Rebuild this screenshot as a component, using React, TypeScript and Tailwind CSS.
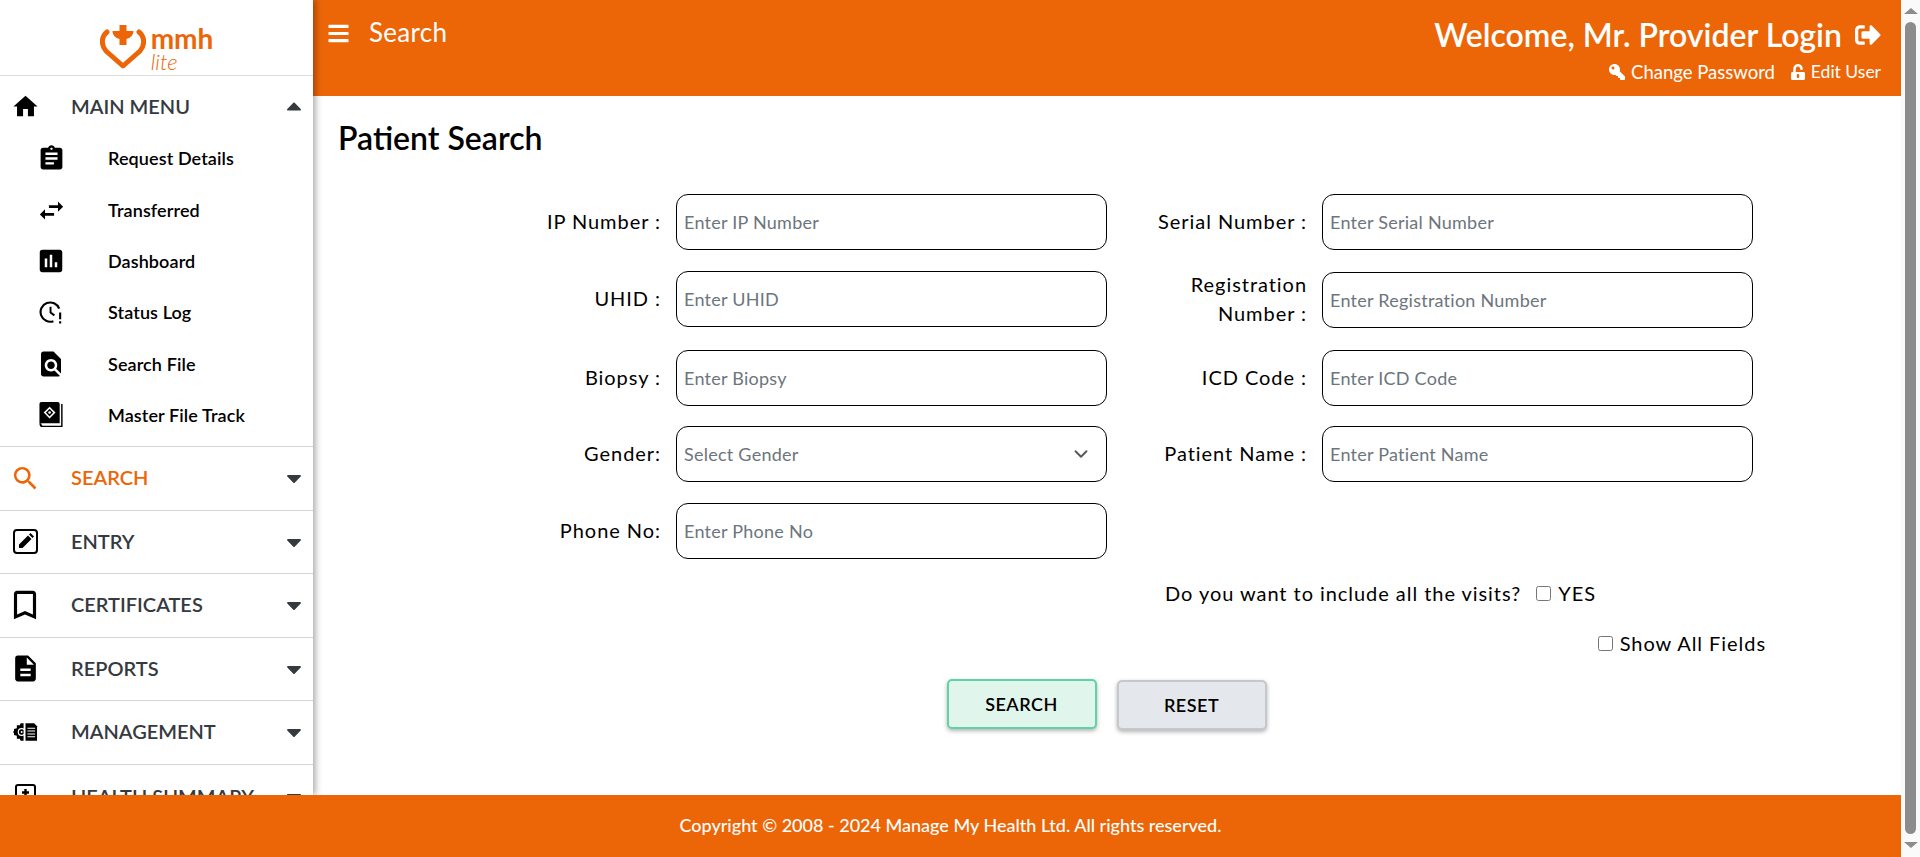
import { JSX, ReactNode } from "react"
import { ChevronDown } from "lucide-react"
import { FaBars, FaCaretDown, FaCaretUp, FaKey, FaSignOutAlt, FaUnlockAlt } from "react-icons/fa"
import {
    MdAssignment,
    MdBookmarkBorder,
    MdDescription,
    MdFindInPage,
    MdHome,
    MdInsertChart,
    MdSearch,
    MdSwapHoriz,
} from "react-icons/md"

function Logo(): JSX.Element {
    return (
        <div className="h-[76px] shrink-0 flex justify-center border-b border-[#dedede]">
            <div className="flex gap-[5px] pt-[24px]">
                <svg viewBox="0 0 46 45" className="w-[46px] h-[45px]">
                    <path d="M7 8 C1 13 1 21 6 27 L23 42 L40 27 C45 21 45 13 39 8" fill="none" stroke="#ec6608" strokeWidth="5" strokeLinecap="round" strokeLinejoin="round" />
                    <path d="M19.5 1 h7 v6 h7 c0 4 -3 7 -7 8 v6 h-7 v-6 c-4 -1 -7 -4 -7 -8 h7 z" fill="#ec6608" />
                </svg>
                <div className="flex flex-col text-[#ec6608]">
                    <span className="text-[28px] leading-[28px] font-bold">mmh</span>
                    <span className="text-[22px] leading-[20px] italic font-light">lite</span>
                </div>
            </div>
        </div>
    )
}

function StatusLogIcon(): JSX.Element {
    return (
        <svg viewBox="0 0 26 26" className="w-[25px] h-[25px]">
            <path d="M21 9 A10 10 0 1 0 15 22" fill="none" stroke="#000" strokeWidth="2.2" />
            <path d="M12 7 v6 l4 3" fill="none" stroke="#000" strokeWidth="2" />
            <path d="M22 13 v7 M22 22 v2.5" stroke="#000" strokeWidth="2.2" />
        </svg>
    )
}

function MasterFileIcon(): JSX.Element {
    return (
        <svg viewBox="0 0 25 28" className="w-[25px] h-[27px]">
            <path d="M2 0 h17 a2 2 0 0 1 2 2 v20 h-21 v-20 a2 2 0 0 1 2 -2 z" fill="#000" />
            <path d="M0 22 c0 3 1 4 3 4 h21 v-24 h-1.5 v22.5 h-19 c-1 0 -1.5 -1 -1.5 -2.5 z" fill="#000" />
            <path d="M10.5 6 l5 5 l-5 5 l-5 -5 z" fill="none" stroke="#fff" strokeWidth="1.6" />
            <circle cx="10.5" cy="11" r="1.3" fill="#fff" />
        </svg>
    )
}

function EntryIcon(): JSX.Element {
    return (
        <svg viewBox="0 0 25 25" className="w-[25px] h-[25px]">
            <rect x="1" y="1" width="23" height="23" rx="3" fill="none" stroke="#000" strokeWidth="2" />
            <path d="M6 19 v-3.5 l9 -9 l3.5 3.5 l-9 9 z M16 5.5 l1.5 -1.5 l3.5 3.5 l-1.5 1.5 z" fill="#000" />
        </svg>
    )
}

function ManagementIcon(): JSX.Element {
    return (
        <svg viewBox="0 0 26 20" className="w-[25px] h-[20px]">
            <path d="M11 1 H8 L7 3 L4 3 L4 6 L1 7 V9 L0 10 L1 11 V13 L4 14 L4 17 L7 17 L8 19 H11 Z" fill="#000" />
            <circle cx="9" cy="10" r="3.5" fill="none" stroke="#fff" strokeWidth="1.2" />
            <circle cx="9" cy="10" r="1" fill="#fff" />
            <path d="M13 1 h9 l3 3 v15 h-12 z" fill="#000" />
            <path d="M15 6 h8 M15 9 h8 M15 12 h8 M15 15 h8" stroke="#fff" strokeWidth="1.1" />
        </svg>
    )
}

function HealthIcon(): JSX.Element {
    return (
        <svg viewBox="0 0 25 25" className="w-[25px] h-[25px]">
            <rect x="3" y="1" width="19" height="23" rx="2" fill="none" stroke="#000" strokeWidth="2" />
            <path d="M12.5 5 v7 M9 8.5 h7" stroke="#000" strokeWidth="2.4" />
        </svg>
    )
}

function MenuRow({ icon, label, active, last }: { icon: ReactNode, label: string, active?: boolean, last?: boolean }): JSX.Element {
    const color = active ? "text-[#ec6608]" : "text-[#343a40]"
    return (
        <div className={last ? "h-[64px] shrink-0 flex items-center pl-[13px] pr-[7px]" : "h-[63.5px] shrink-0 flex items-center pl-[13px] pr-[7px] border-b border-[#d4d4d4]"}>
            <div className={active ? "w-[58px] text-[#ec6608]" : "w-[58px] text-black"}>{icon}</div>
            <span className={`flex-1 text-[20px] leading-[28px] font-semibold pb-[2px] ${color}`}>{label}</span>
            <FaCaretDown className="text-[#343a40] text-[24px]" />
        </div>
    )
}

function SubItem({ icon, label }: { icon: ReactNode, label: string }): JSX.Element {
    return (
        <div className="h-[51.4px] flex items-center pl-[39px]">
            <div className="w-[69px] flex">{icon}</div>
            <span className="text-[18px] leading-[26px] font-semibold tracking-[0.1px] pb-[1px] text-black">{label}</span>
        </div>
    )
}

function Sidebar(): JSX.Element {
    return (
        <div id="sidebar" className="relative z-10 w-[313px] shrink-0 bg-white flex flex-col overflow-hidden shadow-[3px_0_6px_rgba(0,0,0,0.3)]">
            <Logo />
            <div className="h-[371px] shrink-0 border-b border-[#d4d4d4]">
                <div className="h-[57px] pt-[3px] flex items-center pl-[13px] pr-[7px]">
                    <div className="w-[58px]"><MdHome className="text-[29px] -ml-[2px] text-black" /></div>
                    <span className="flex-1 text-[20px] font-semibold text-[#343a40]">MAIN MENU</span>
                    <FaCaretUp className="text-[#343a40] text-[24px]" />
                </div>
                <SubItem icon={<MdAssignment className="text-[29px] -ml-[2px] text-black" />} label="Request Details" />
                <SubItem icon={<MdSwapHoriz className="text-[31px] -ml-[3px] text-black" />} label="Transferred" />
                <SubItem icon={<MdInsertChart className="text-[30px] -ml-[3px] text-black" />} label="Dashboard" />
                <SubItem icon={<StatusLogIcon />} label="Status Log" />
                <SubItem icon={<MdFindInPage className="text-[30px] -ml-[3px] text-black" />} label="Search File" />
                <SubItem icon={<MasterFileIcon />} label="Master File Track" />
            </div>
            <MenuRow icon={<MdSearch className="text-[31px] -ml-[3px]" />} label="SEARCH" active />
            <MenuRow icon={<EntryIcon />} label="ENTRY" />
            <MenuRow icon={<MdBookmarkBorder className="text-[38px] -ml-[7px]" />} label="CERTIFICATES" />
            <MenuRow icon={<MdDescription className="text-[31px] -ml-[3px]" />} label="REPORTS" />
            <MenuRow icon={<ManagementIcon />} label="MANAGEMENT" />
            <MenuRow icon={<HealthIcon />} label="HEALTH SUMMARY" last />
        </div>
    )
}

function Header(): JSX.Element {
    return (
        <div id="header" className="h-[96px] shrink-0 bg-[#ec6608] text-white flex justify-between pl-[14px] pr-[20px]">
            <div className="flex items-center gap-[19px] h-[66px]">
                <FaBars className="text-[23px]" />
                <span className="text-[26px] tracking-[0.3px] pb-[2px]">Search</span>
            </div>
            <div className="flex flex-col items-end pt-[13px]">
                <div className="flex items-center gap-[13px]">
                    <span className="text-[32px] leading-[44px] font-semibold">Welcome, Mr. Provider Login</span>
                    <FaSignOutAlt className="text-[26px]" />
                </div>
                <div className="flex items-center gap-[15px] text-[18.5px] leading-[28px] pt-[1px]">
                    <span className="flex items-center gap-[6px]"><FaKey className="text-[16px] -scale-x-100" />Change Password</span>
                    <span className="flex items-center gap-[5px] text-[17.5px]"><FaUnlockAlt className="text-[16px]" />Edit User</span>
                </div>
            </div>
        </div>
    )
}

function Field({ label, placeholder }: { label: ReactNode, placeholder: string }): JSX.Element {
    return (
        <div className="h-[56px] flex items-center gap-[15px]">
            <label className="w-[170px] text-right text-[20px] leading-[29px] tracking-[0.95px] text-black pb-[2px]">{label}</label>
            <input
                placeholder={placeholder}
                className="w-[431px] h-[56px] border border-black rounded-[12px] px-[7px] text-[18px] tracking-[0.25px] bg-white placeholder:text-[#6c757d]"
            />
        </div>
    )
}

function SearchForm(): JSX.Element {
    return (
        <div id="searchForm" className="flex flex-col">
            <div className="flex pl-[178px] gap-[30px]">
                <div className="flex flex-col gap-[21px]">
                    <Field label="IP Number :" placeholder="Enter IP Number" />
                    <Field label="UHID :" placeholder="Enter UHID" />
                    <div className="mt-[2px]"><Field label="Biopsy :" placeholder="Enter Biopsy" /></div>
                    <div className="h-[56px] -mt-[1px] flex items-center gap-[15px]">
                        <label className="w-[170px] text-right text-[20px] tracking-[0.95px] text-black pb-[2px]">Gender:</label>
                        <div className="relative">
                            <select className="w-[431px] h-[56px] border border-black rounded-[12px] px-[7px] text-[18px] tracking-[0.25px] bg-white text-[#6c757d] appearance-none">
                                <option>Select Gender</option>
                            </select>
                            <ChevronDown className="absolute right-[15px] top-[17px] w-[22px] h-[22px] text-[#555]" />
                        </div>
                    </div>
                    <Field label="Phone No:" placeholder="Enter Phone No" />
                </div>
                <div className="flex flex-col gap-[21px]">
                    <Field label="Serial Number :" placeholder="Enter Serial Number" />
                    <div className="pt-[1px] pb-[1px]"><Field label="Registration Number :" placeholder="Enter Registration Number" /></div>
                    <Field label="ICD Code :" placeholder="Enter ICD Code" />
                    <div className="-mt-[1px]"><Field label="Patient Name :" placeholder="Enter Patient Name" /></div>
                </div>
            </div>
            <div className="flex justify-end items-center gap-[7px] mt-[20px] pr-[305px] text-[20px] tracking-[0.95px] text-black h-[28px]">
                <span className="mr-[8px]">Do you want to include all the visits?</span>
                <input type="checkbox" className="w-[15px] h-[15px]" />
                <span>YES</span>
            </div>
            <div className="flex justify-end items-center gap-[7px] mt-[22px] pr-[135px] text-[20px] tracking-[0.95px] text-black h-[28px]">
                <input type="checkbox" className="w-[15px] h-[15px]" />
                <span>Show All Fields</span>
            </div>
            <div className="flex justify-center gap-[20px] mt-[22px] pr-[1px]">
                <button className="w-[150px] h-[50px] rounded-[5px] border-2 border-[#5fd3a8] bg-[#e0f6ec] text-[18px] font-semibold tracking-[0.5px] text-black shadow-[0_2px_4px_rgba(0,0,0,0.3)]">SEARCH</button>
                <button className="w-[150px] h-[50px] mt-[1px] rounded-[5px] border-2 border-[#c4c8cc] bg-[#e4e8ec] text-[18px] font-semibold tracking-[0.5px] text-black shadow-[0_2px_4px_rgba(0,0,0,0.3)]">RESET</button>
            </div>
        </div>
    )
}

function Scrollbar(): JSX.Element {
    return (
        <div id="scrollbar" className="w-[19px] shrink-0 bg-[#fafafa] flex flex-col items-center justify-between pt-[8px] pb-[9px]">
            <div className="w-0 h-0 border-x-[7px] border-x-transparent border-b-[6px] border-b-[#8c8c8c]" />
            <div className="w-[11px] flex-1 my-[8px] rounded-[6px] bg-[#8c8c8c]" />
            <div className="w-0 h-0 border-x-[7px] border-x-transparent border-t-[6px] border-t-[#8c8c8c]" />
        </div>
    )
}

export default function App(): JSX.Element {
    return (
        <div id="app" className="w-full h-[857px] flex overflow-hidden font-['Lato',sans-serif]">
            <div className="flex-1 min-w-0 flex flex-col">
                <div className="flex-1 min-h-0 flex">
                    <Sidebar />
                    <div id="main" className="flex-1 min-w-0 flex flex-col bg-white">
                        <Header />
                        <div className="flex-1 min-h-0">
                            <h1 className="pl-[25px] pt-[20px] h-[98px] text-[32px] leading-[44px] font-semibold text-black">Patient Search</h1>
                            <SearchForm />
                        </div>
                    </div>
                </div>
                <div id="footer" className="relative z-20 h-[62px] shrink-0 bg-[#ec6608] flex items-center justify-center pb-[2px] text-[18px] font-medium text-white">
                    Copyright © 2008 - 2024 Manage My Health Ltd. All rights reserved.
                </div>
            </div>
            <Scrollbar />
        </div>
    )
}
